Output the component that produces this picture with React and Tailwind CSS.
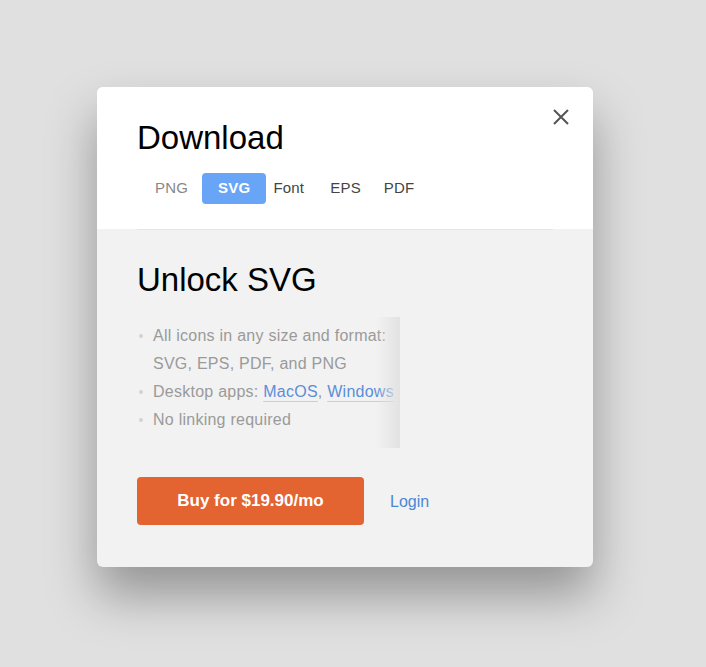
import React, { useState } from "react";

const tabs = ["PNG", "SVG", "Font", "EPS", "PDF"];

// left margin of each tab label, tuned to the reference spacing
const tabMargins = {
   PNG: "ml-[18px]",
   SVG: "ml-[14px]",
   Font: "ml-[7px]",
   EPS: "ml-[26px]",
   PDF: "ml-[23px]",
};

const App = () => {
   const [active, setActive] = useState("SVG");

   return (
      <div
         className="min-h-[667px] w-full bg-[#e0e0e0] pl-[97px] pt-[87px]"
         style={{ fontFamily: '"Liberation Sans", Arial, sans-serif' }}
      >
         <div className="relative w-[496px] overflow-hidden rounded-[6px] bg-[#f2f2f2] shadow-[0_28px_50px_rgba(0,0,0,0.34)]">
            {/* Close */}
            <button className="absolute right-[24px] top-[22px] h-4 w-4 text-[#555]">
               <svg viewBox="0 0 16 16" className="h-4 w-4">
                  <path
                     d="M1 1 L15 15 M15 1 L1 15"
                     stroke="currentColor"
                     strokeWidth="2"
                     fill="none"
                  />
               </svg>
            </button>

            {/* Header */}
            <div className="h-[142px] bg-white px-10 pt-[34px]">
               <h1 className="text-[33px] leading-none text-black">Download</h1>
               <div className="mt-[19px] flex h-[31px] items-stretch">
                  {tabs.map((tab) => (
                     <button
                        key={tab}
                        onClick={() => setActive(tab)}
                        className={`flex items-center text-[15px] tracking-[0.2px] ${tabMargins[tab]} ${
                           active === tab
                              ? "rounded-[4px] bg-[#69a5f7] px-4 font-bold text-white"
                              : tab === "PNG"
                              ? "text-[#888]"
                              : "text-[#444]"
                        }`}
                     >
                        {tab}
                     </button>
                  ))}
               </div>
            </div>

            {/* Body */}
            <div className="px-10 pb-[42px]">
               <div className="border-t border-[#e4e4e4]" />
               <h2 className="pt-[33px] text-[33px] leading-none text-black">
                  Unlock SVG
               </h2>

               <div className="relative mt-[21px] w-[263px] pb-[14px] pt-[5px]">
                  <ul className="text-[16px] leading-[28px] tracking-[0.25px] text-[#9a9a9a]">
                     <li className="flex">
                        <span className="mt-[12px] ml-[2px] h-[4px] w-[4px] shrink-0 rounded-full bg-[#d2d2d2]" />
                        <span className="ml-[10px]">
                           All icons in any size and format:
                           <br />
                           SVG, EPS, PDF, and PNG
                        </span>
                     </li>
                     <li className="flex">
                        <span className="mt-[12px] ml-[2px] h-[4px] w-[4px] shrink-0 rounded-full bg-[#d2d2d2]" />
                        <span className="ml-[10px] whitespace-nowrap">
                           Desktop apps:{" "}
                           <a className="text-[#5b8ed8] underline decoration-[#bcd1ef] underline-offset-[4px]">
                              MacOS
                           </a>
                           ,{" "}
                           <a className="text-[#5b8ed8] underline decoration-[#bcd1ef] underline-offset-[4px]">
                              Windows
                           </a>
                        </span>
                     </li>
                     <li className="flex">
                        <span className="mt-[12px] ml-[2px] h-[4px] w-[4px] shrink-0 rounded-full bg-[#d2d2d2]" />
                        <span className="ml-[10px]">No linking required</span>
                     </li>
                  </ul>
                  {/* fade on the right edge */}
                  <div className="absolute bottom-0 right-0 top-0 w-[24px] bg-linear-to-r from-[#f2f2f2]/0 to-[#e2e2e2]" />
               </div>

               <div className="mt-[29px] flex items-center">
                  <button className="h-[48px] w-[227px] rounded-[4px] bg-[#e36331] text-[17px] font-bold text-white">
                     Buy for $19.90/mo
                  </button>
                  <a className="ml-[26px] mt-[2px] text-[16px] text-[#4a87d5]">Login</a>
               </div>
            </div>
         </div>
      </div>
   );
};

export default App;
